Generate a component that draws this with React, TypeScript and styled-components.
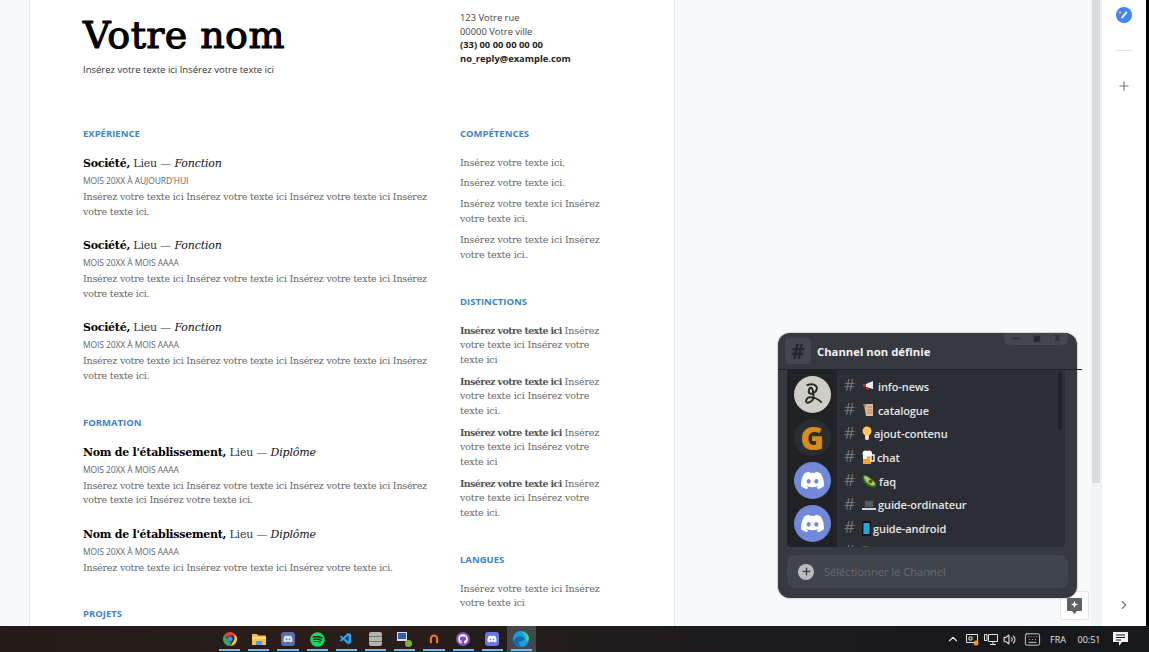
import React from 'react';
import styled, { createGlobalStyle } from 'styled-components';
import { FaDiscord, FaSpotify, FaGithub } from 'react-icons/fa';
import { VscVscode } from 'react-icons/vsc';
import { ChevronRight, ChevronUp, Plus, Volume2, Keyboard } from 'lucide-react';

const SERIF = "'DejaVu Serif', 'Liberation Serif', serif";
const SANS = "'Open Sans', 'Noto Sans', sans-serif";

const GlobalStyles = createGlobalStyle`
  html, body {
    margin: 0;
    padding: 0;
    overflow: hidden;
    background: #f8f9fa;
    font-family: ${SANS};
  }
`;

const Screen = styled.div`
  position: relative;
  width: 1149px;
  height: 652px;
  display: flex;
  flex-direction: column;
  overflow: hidden;
`;

const Workspace = styled.div`
  flex: 1;
  min-height: 0;
  display: flex;
  overflow: hidden;
`;

const DocArea = styled.div`
  flex: 1;
  padding-left: 29px;
  background: #f8f9fa;
`;

const Page = styled.div`
  width: 591px;
  height: 700px;
  padding: 0 0 0 53px;
  background: #fff;
  border-left: 1px solid #e6e8eb;
  border-right: 1px solid #e6e8eb;
  display: grid;
  grid-template-columns: 377px 1fr;
`;

const Column = styled.div`
  display: flex;
  flex-direction: column;
`;

const Title = styled.h1`
  margin: 12px 0 0;
  font-family: ${SERIF};
  font-size: 38px;
  line-height: 46px;
  font-weight: 400;
  letter-spacing: 0.4px;
  -webkit-text-stroke: 1.1px #000;
  color: #000;
`;

const Subtitle = styled.div`
  margin-top: 5px;
  font-size: 9.5px;
  line-height: 14px;
  color: #333;
`;

const Contact = styled.div`
  margin-top: 11px;
  font-size: 9.4px;
  line-height: 13.5px;
  color: #444;
`;

const ContactStrong = styled.div`
  font-weight: 700;
  color: #222;
`;

const Heading = styled.h2<{ $top: number }>`
  margin: ${(p) => p.$top}px 0 0;
  font-size: 9.5px;
  line-height: 14px;
  font-weight: 700;
  color: #3d85c6;
`;

const Entry = styled.div<{ $top: number }>`
  margin-top: ${(p) => p.$top}px;
  width: 350px;
`;

const EntryTitle = styled.div`
  font-family: ${SERIF};
  font-size: 11px;
  line-height: 16px;
  letter-spacing: -0.18px;
  color: #333;
`;

const EntryStrong = styled.strong`
  letter-spacing: -0.26px;
  color: #000;
`;

const EntryRole = styled.em`
  color: #111;
`;

const Dates = styled.div`
  margin: 2px 0 2px;
  font-size: 8.5px;
  line-height: 14px;
  letter-spacing: -0.1px;
  color: #666;
`;

const Body = styled.div`
  font-family: ${SERIF};
  font-size: 9.5px;
  line-height: 14.6px;
  letter-spacing: -0.21px;
  color: #666;
`;

const Note = styled(Body)<{ $top: number }>`
  margin-top: ${(p) => p.$top}px;
  width: 150px;
  letter-spacing: -0.14px;
`;

const NoteStrong = styled.strong`
  letter-spacing: -0.62px;
  color: #555;
`;

const Scrollbar = styled.div`
  width: 10px;
  padding-left: 1px;
  box-sizing: border-box;
  background: #f1f3f4;
`;

const ScrollThumb = styled.div`
  width: 8px;
  height: 483px;
  background: #dadce0;
`;

const SidePanel = styled.aside`
  width: 44px;
  background: #fff;
  border-left: 1px solid #eceef0;
  border-right: 3px solid #000;
  display: flex;
  flex-direction: column;
  align-items: center;
  padding-top: 7px;
  color: #777;
`;

const SideDivider = styled.div`
  width: 16px;
  height: 1px;
  margin: 27px 0 28px;
  background: #e3e5e8;
`;

const SideBottom = styled.div`
  margin-top: auto;
  margin-bottom: 14px;
  display: flex;
`;

const Widget = styled.section`
  position: absolute;
  left: 778px;
  top: 333px;
  width: 299px;
  height: 265px;
  border-radius: 12px;
  background: #36393f;
  box-shadow: 0 0 2px rgba(0, 0, 0, 0.45);
  display: flex;
  flex-direction: column;
`;

const WidgetHeader = styled.header`
  position: relative;
  height: 36px;
  flex: none;
  display: flex;
  align-items: center;
  gap: 6px;
  padding-left: 7px;
  border-bottom: 1px solid #212226;
  color: #f2f3f5;
  font-size: 11.3px;
  font-weight: 700;

  &::after {
    content: '';
    position: absolute;
    left: 299px;
    bottom: -1px;
    width: 5px;
    height: 1px;
    background: #212226;
  }
`;

const HashBox = styled.div`
  width: 26px;
  height: 26px;
  border-radius: 4px;
  background: #43464d;
  color: #24262a;
  font-size: 21px;
  font-weight: 700;
  display: flex;
  align-items: center;
  justify-content: center;
`;

const WindowButtons = styled.div`
  position: absolute;
  right: 9px;
  top: 0;
  width: 64px;
  height: 12px;
  padding: 0 8px;
  box-sizing: border-box;
  border-radius: 0 0 5px 5px;
  background: #43464d;
  color: #24262a;
  font-size: 8px;
  font-weight: 700;
  line-height: 10px;
  display: flex;
  justify-content: space-between;
`;

const ListPanel = styled.div`
  position: relative;
  margin: 0 12px 0 9px;
  height: 177px;
  flex: none;
  display: flex;
  overflow: hidden;
  border-radius: 0 0 4px 4px;
  background: #2c2e33;
`;

const ServerRail = styled.div`
  width: 50px;
  flex: none;
  background: #202225;
  display: flex;
  flex-direction: column;
  align-items: center;
  gap: 6px;
  padding-top: 6px;
`;

const Avatar = styled.div<{ $bg: string; $color?: string }>`
  width: 37px;
  height: 37px;
  flex: none;
  border-radius: 50%;
  background: ${(p) => p.$bg};
  color: ${(p) => p.$color || '#fff'};
  display: flex;
  align-items: center;
  justify-content: center;
  font-family: ${SANS};
  font-size: 32px;
  font-weight: 800;
`;

const Channels = styled.ul`
  list-style: none;
  margin: 0;
  padding: 4.5px 0 0 7px;
`;

const Channel = styled.li`
  height: 23.7px;
  display: flex;
  align-items: center;
  color: #e4e5e7;
  font-size: 11px;
  font-weight: 600;
  letter-spacing: -0.1px;
  white-space: nowrap;
`;

const ChannelHash = styled.span`
  width: 18px;
  flex: none;
  margin-bottom: 3px;
  color: #72767d;
  font-size: 17px;
  font-weight: 400;
`;

const ChannelIcon = styled.svg`
  flex: none;
  margin-right: 2px;
`;

const ListScroll = styled.div`
  position: absolute;
  right: 3px;
  top: 2px;
  width: 4px;
  height: 58px;
  border-radius: 2px;
  background: #202225;
`;

const InputBar = styled.div`
  margin: 8px 9px 0 9px;
  height: 33px;
  border-radius: 8px;
  background: #40444b;
  display: flex;
  align-items: center;
  gap: 10px;
  padding-left: 11px;
  color: #666a72;
  font-size: 11.1px;
`;

const PlusDisc = styled.div`
  width: 16px;
  height: 16px;
  border-radius: 50%;
  background: #b9bbbe;
  color: #40444b;
  display: flex;
  align-items: center;
  justify-content: center;
`;

const CommentButton = styled.button`
  position: absolute;
  left: 1060px;
  top: 591px;
  width: 29px;
  height: 29px;
  padding: 0;
  background: #fff;
  border: 1px solid #e3e5e8;
  border-radius: 2px;
  display: flex;
  align-items: center;
  justify-content: center;
`;

const Taskbar = styled.footer`
  height: 26px;
  flex: none;
  display: flex;
  align-items: center;
  padding-left: 215px;
  background: linear-gradient(90deg, #241a18 0%, #2a1e1a 30%, #1d1b1d 60%, #16181b 100%);
  color: #e4e4e4;
`;

const TaskItem = styled.div<{ $active?: boolean }>`
  position: relative;
  width: 29.2px;
  height: 26px;
  display: flex;
  align-items: center;
  justify-content: center;
  background: ${(p) => (p.$active ? '#45494d' : 'transparent')};

  &::after {
    content: '';
    position: absolute;
    left: 4px;
    right: 4px;
    bottom: 1px;
    height: 2px;
    background: #76b9ed;
  }
`;

const TaskIconDisc = styled.div<{ $bg: string; $color: string; $square?: boolean }>`
  width: 14px;
  height: 14px;
  border-radius: ${(p) => (p.$square ? '3px' : '50%')};
  background: ${(p) => p.$bg};
  color: ${(p) => p.$color};
  display: flex;
  align-items: center;
  justify-content: center;
`;

const Tray = styled.div`
  margin-left: auto;
  display: flex;
  align-items: center;
  height: 100%;
  padding-right: 16px;
  font-size: 9px;
`;

const TrayItem = styled.div<{ $w: number }>`
  width: ${(p) => p.$w}px;
  flex: none;
  display: flex;
  align-items: center;
  justify-content: center;
`;

const jobs = [
  { top: 15, title: 'Société,', place: ' Lieu — ', role: 'Fonction', dates: "MOIS 20XX À AUJOURD'HUI", text: 'Insérez votre texte ici Insérez votre texte ici Insérez votre texte ici Insérez votre texte ici.' },
  { top: 19, title: 'Société,', place: ' Lieu — ', role: 'Fonction', dates: 'MOIS 20XX À MOIS AAAA', text: 'Insérez votre texte ici Insérez votre texte ici Insérez votre texte ici Insérez votre texte ici.' },
  { top: 19, title: 'Société,', place: ' Lieu — ', role: 'Fonction', dates: 'MOIS 20XX À MOIS AAAA', text: 'Insérez votre texte ici Insérez votre texte ici Insérez votre texte ici Insérez votre texte ici.' },
];

const schools = [
  { top: 15, title: "Nom de l'établissement,", place: ' Lieu — ', role: 'Diplôme', dates: 'MOIS 20XX À MOIS AAAA', text: 'Insérez votre texte ici Insérez votre texte ici Insérez votre texte ici Insérez votre texte ici Insérez votre texte ici.' },
  { top: 19, title: "Nom de l'établissement,", place: ' Lieu — ', role: 'Diplôme', dates: 'MOIS 20XX À MOIS AAAA', text: 'Insérez votre texte ici Insérez votre texte ici Insérez votre texte ici.' },
];

const skills = [
  { top: 14.5, text: 'Insérez votre texte ici.' },
  { top: 5.5, text: 'Insérez votre texte ici.' },
  { top: 7, text: 'Insérez votre texte ici Insérez votre texte ici.' },
  { top: 7, text: 'Insérez votre texte ici Insérez votre texte ici.' },
];

const awards = [
  { top: 15, rest: ' Insérez votre texte ici Insérez votre texte ici' },
  { top: 7.3, rest: ' Insérez votre texte ici Insérez votre texte ici.' },
  { top: 7.3, rest: ' Insérez votre texte ici Insérez votre texte ici' },
  { top: 7.3, rest: ' Insérez votre texte ici Insérez votre texte ici.' },
];

const Megaphone = () => (
  <ChannelIcon width="14" height="12" viewBox="0 0 14 12">
    <path d="M1 4h3l7-3v8L4 7H1z" fill="#eee" />
    <path d="M1 4h3v3H1z" fill="#d8232a" />
    <path d="M4 7l1 3h2L6 7z" fill="#d8232a" />
  </ChannelIcon>
);
const Scroll = () => (
  <ChannelIcon width="14" height="14" viewBox="0 0 14 14">
    <path d="M2 1h9v12H4z" fill="#dcb79c" />
    <path d="M1 1h3v3H2z" fill="#a97f66" />
    <path d="M5 4h5M5 7h5M5 10h5" stroke="#a97f66" />
  </ChannelIcon>
);
const Bulb = () => (
  <ChannelIcon width="10" height="15" viewBox="0 0 10 15">
    <circle cx="5" cy="5" r="4.5" fill="#ffc75a" />
    <path d="M3 9h4v4H3z" fill="#ffd987" />
    <path d="M3.5 12h3v2h-3z" fill="#ccd6dd" />
  </ChannelIcon>
);
const Beer = () => (
  <ChannelIcon width="13" height="15" viewBox="0 0 13 15">
    <path d="M1 4h8v10H1z" fill="#f5a623" />
    <path d="M9 5h3v6H9z" fill="none" stroke="#f3f3f3" strokeWidth="1.4" />
    <circle cx="3.5" cy="3.5" r="3" fill="#fff" />
    <circle cx="7" cy="3.5" r="3" fill="#fff" />
    <path d="M1 6h4v3H1z" fill="#fff" />
  </ChannelIcon>
);
const Avocado = () => (
  <ChannelIcon width="15" height="14" viewBox="0 0 15 14">
    <path d="M0.500 1.500c3-2 5 0 8 2.500 3 2 6 4 6 7 0 2-3 3-6 2-5-2-9-7-8-11.500z" fill="#2f6b1a" />
    <path d="M2 2.500c2-1 4 .5 6.500 2.500 2.500 2 4.500 3.500 4.500 5.500 0 1-2 1.500-4 .5C5 9.500 2 6 2 2.500z" fill="#a9cf6f" />
    <circle cx="8.500" cy="7.500" r="2" fill="#6d4a1f" />
  </ChannelIcon>
);
const Laptop = () => (
  <ChannelIcon width="14" height="12" viewBox="0 0 14 12">
    <path d="M2 1h10v8H2z" fill="#31373d" />
    <path d="M3 2h8v6H3z" fill="#55595e" />
    <path d="M0 9h14v2H0z" fill="#ccd6dd" />
  </ChannelIcon>
);
const Phone = () => (
  <ChannelIcon width="9" height="15" viewBox="0 0 9 15">
    <rect width="9" height="15" rx="1.5" fill="#111" />
    <path d="M1.4 2h6.2v11H1.4z" fill="#22a7e0" />
  </ChannelIcon>
);
const Leaf = () => (
  <ChannelIcon width="14" height="14" viewBox="0 0 14 14">
    <path d="M1 1h5l6 6-5 5-6-6z" fill="#3e721d" />
    <path d="M7 2l5 2v5z" fill="#b5373b" />
  </ChannelIcon>
);

const channels: [string, React.ReactNode][] = [
  ['info-news', <Megaphone />],
  ['catalogue', <Scroll />],
  ['ajout-contenu', <Bulb />],
  ['chat', <Beer />],
  ['faq', <Avocado />],
  ['guide-ordinateur', <Laptop />],
  ['guide-android', <Phone />],
  ['guide-consoles', <Leaf />],
];

const Chrome = () => (
  <svg width="14" height="14" viewBox="0 0 16 16">
    <path d="M8 0a8 8 0 0 1 7 4H8a4 4 0 0 0-3.800 2.700L1.700 3A8 8 0 0 1 8 0z" fill="#e0483b" />
    <path d="M15 4a8 8 0 0 1-6.500 12L12 10a4 4 0 0 0-.7-6z" fill="#fbc02d" />
    <path d="M1.700 3l3.500 6a4 4 0 0 0 4.500 2.700L8 16A8 8 0 0 1 1.700 3z" fill="#3da650" />
    <circle cx="8" cy="8" r="3.100" fill="#4285f4" />
  </svg>
);
const Folder = () => (
  <svg width="14" height="13" viewBox="0 0 14 13">
    <path d="M0 1h5l1 1.500h8V12H0z" fill="#f5c04a" />
    <path d="M0 4h14v2H0z" fill="#ffe08a" />
    <path d="M4 8h6v4H4z" fill="#4aa3df" />
  </svg>
);
const Database = () => (
  <svg width="13" height="14" viewBox="0 0 13 14">
    <rect width="13" height="14" rx="2" fill="#b4b4b0" />
    <path d="M0 4.500h13M0 9.500h13" stroke="#77776f" />
  </svg>
);
const RemoteDesktop = () => (
  <svg width="15" height="15" viewBox="0 0 15 15">
    <path d="M0 0h10v9H0z" fill="#d9dee4" />
    <path d="M1 1h8v6H1z" fill="#2f5fa8" />
    <circle cx="11.500" cy="11.500" r="3.500" fill="#7cb342" />
  </svg>
);
const Arch = () => (
  <svg width="10" height="10" viewBox="0 0 12 13">
    <path d="M2 12V6a4 4 0 0 1 8 0v6" fill="none" stroke="#e8772e" strokeWidth="2.800" />
  </svg>
);
const Edge = () => (
  <svg width="16" height="16" viewBox="0 0 16 16">
    <circle cx="8" cy="8" r="8" fill="#1b9de2" />
    <path d="M1 10c1-5 8-6 10-3 1 2-1 3-3 3-3 0-3 3 0 5-4 1-7-2-7-5z" fill="#0c6cb0" />
    <path d="M9 1c3 0 6 2 7 6 0 2-1 3-3 3 1-4-2-7-4-9z" fill="#4cd08d" />
  </svg>
);
const TrayRemote = () => (
  <svg width="14" height="14" viewBox="0 0 14 14" fill="none" stroke="#e4e4e4">
    <path d="M1.500 2.500h11v8h-11z" />
    <path d="M4 5h3v3H4z" />
    <circle cx="11" cy="11" r="2.500" fill="#f7931e" stroke="none" />
  </svg>
);
const TrayNetwork = () => (
  <svg width="14" height="13" viewBox="0 0 14 13" fill="none" stroke="#e4e4e4">
    <path d="M4.500 1.500h9v7h-9zM9 8.500v3M6 11.500h6" />
    <path d="M.5 1.500h2.500v6H.5z" />
  </svg>
);
const TrayNotes = () => (
  <svg width="15" height="14" viewBox="0 0 15 14">
    <path d="M0 0h15v10H9l-3 4v-4H0z" fill="#f0f0f0" />
    <path d="M3 3h9M3 5.500h9M3 8h5" stroke="#1b1a1c" />
  </svg>
);

const App = () => (
  <Screen>
    <GlobalStyles />
    <Workspace>
      <DocArea>
        <Page>
          <Column>
            <Title>Votre nom</Title>
            <Subtitle>Insérez votre texte ici Insérez votre texte ici</Subtitle>
            <Heading $top={50}>EXPÉRIENCE</Heading>
            {jobs.map((e, i) => (
              <Entry key={i} $top={e.top}>
                <EntryTitle>
                  <EntryStrong>{e.title}</EntryStrong>
                  {e.place}
                  <EntryRole>{e.role}</EntryRole>
                </EntryTitle>
                <Dates>{e.dates}</Dates>
                <Body>{e.text}</Body>
              </Entry>
            ))}
            <Heading $top={32}>FORMATION</Heading>
            {schools.map((e, i) => (
              <Entry key={i} $top={e.top}>
                <EntryTitle>
                  <EntryStrong>{e.title}</EntryStrong>
                  {e.place}
                  <EntryRole>{e.role}</EntryRole>
                </EntryTitle>
                <Dates>{e.dates}</Dates>
                <Body>{e.text}</Body>
              </Entry>
            ))}
            <Heading $top={32}>PROJETS</Heading>
          </Column>
          <Column>
            <Contact>
              123 Votre rue
              <br />
              00000 Votre ville
              <ContactStrong>(33) 00 00 00 00 00</ContactStrong>
              <ContactStrong>no_reply@example.com</ContactStrong>
            </Contact>
            <Heading $top={62}>COMPÉTENCES</Heading>
            {skills.map((s, i) => (
              <Note key={i} $top={s.top}>{s.text}</Note>
            ))}
            <Heading $top={32}>DISTINCTIONS</Heading>
            {awards.map((a, i) => (
              <Note key={i} $top={a.top}>
                <NoteStrong>Insérez votre texte ici</NoteStrong>
                {a.rest}
              </Note>
            ))}
            <Heading $top={32}>LANGUES</Heading>
            <Note $top={15}>Insérez votre texte ici Insérez votre texte ici</Note>
          </Column>
        </Page>
      </DocArea>
      <Scrollbar>
        <ScrollThumb />
      </Scrollbar>
      <SidePanel>
        <svg width="16" height="16" viewBox="0 0 16 16">
          <circle cx="8" cy="8" r="8" fill="#4285f4" />
          <path d="M5 10.500l1.500 1 5-6-1.500-1z" fill="#fff" />
          <circle cx="4" cy="5.500" r="1.200" fill="#fbbc04" />
        </svg>
        <SideDivider />
        <Plus size={14} />
        <SideBottom>
          <ChevronRight size={14} />
        </SideBottom>
      </SidePanel>
    </Workspace>
    <Taskbar>
      <TaskItem><Chrome /></TaskItem>
      <TaskItem><Folder /></TaskItem>
      <TaskItem><TaskIconDisc $square $bg="#5f6ea6" $color="#dfe3f2"><FaDiscord size={10} /></TaskIconDisc></TaskItem>
      <TaskItem><FaSpotify size={15} color="#1ed760" /></TaskItem>
      <TaskItem><VscVscode size={14} color="#2d9fe8" /></TaskItem>
      <TaskItem><Database /></TaskItem>
      <TaskItem><RemoteDesktop /></TaskItem>
      <TaskItem><Arch /></TaskItem>
      <TaskItem><TaskIconDisc $bg="#7e4fb5" $color="#fff"><FaGithub size={10} /></TaskIconDisc></TaskItem>
      <TaskItem><TaskIconDisc $square $bg="#6a78e0" $color="#fff"><FaDiscord size={10} /></TaskIconDisc></TaskItem>
      <TaskItem $active><Edge /></TaskItem>
      <Tray>
        <TrayItem $w={19}><ChevronUp size={14} /></TrayItem>
        <TrayItem $w={19}><TrayRemote /></TrayItem>
        <TrayItem $w={19}><TrayNetwork /></TrayItem>
        <TrayItem $w={19}><Volume2 size={13} /></TrayItem>
        <TrayItem $w={26}><Keyboard size={17} strokeWidth={1.2} /></TrayItem>
        <TrayItem $w={26}>FRA</TrayItem>
        <TrayItem $w={36}>00:51</TrayItem>
        <TrayItem $w={26}><TrayNotes /></TrayItem>
      </Tray>
    </Taskbar>
    <CommentButton>
      <svg width="15" height="16" viewBox="0 0 15 16">
        <path d="M1 0h13a1 1 0 0 1 1 1v11a1 1 0 0 1-1 1h-4l-2.500 3L5 13H1a1 1 0 0 1-1-1V1a1 1 0 0 1 1-1z" fill="#5f6368" />
        <path d="M7.500 3l1 2.500 2.500 1-2.500 1-1 2.500-1-2.500L4 6.500l2.500-1z" fill="#fff" />
      </svg>
    </CommentButton>
    <Widget>
      <WidgetHeader>
        <HashBox>#</HashBox>
        Channel non définie
        <WindowButtons>
          <span>—</span>
          <span>▣</span>
          <span>X</span>
        </WindowButtons>
      </WidgetHeader>
      <ListPanel>
        <ServerRail>
          <Avatar $bg="#cfcec6" $color="#2a2a28">
            <svg width="28" height="28" viewBox="0 0 26 26" fill="none" stroke="#2a2a28" strokeWidth="1.800">
              <path d="M8 4c8-3 12 2 8 6-3 3-6 2-6 0 0-4 3-6 4 0 1 5 0 9-4 10-4 1-3-4 1-5 5 0 9 3 11 5" />
            </svg>
          </Avatar>
          <Avatar $bg="#2b2d31" $color="#d98a1c">G</Avatar>
          <Avatar $bg="#7289da"><FaDiscord size={25} /></Avatar>
          <Avatar $bg="#7289da"><FaDiscord size={25} /></Avatar>
          <Avatar $bg="#3d4a7a" />
        </ServerRail>
        <Channels>
          {channels.map(([name, icon]) => (
            <Channel key={name}>
              <ChannelHash>#</ChannelHash>
              {icon}
              {name}
            </Channel>
          ))}
        </Channels>
        <ListScroll />
      </ListPanel>
      <InputBar>
        <PlusDisc><Plus size={11} strokeWidth={3} /></PlusDisc>
        Séléctionner le Channel
      </InputBar>
    </Widget>
  </Screen>
);

export default App;
